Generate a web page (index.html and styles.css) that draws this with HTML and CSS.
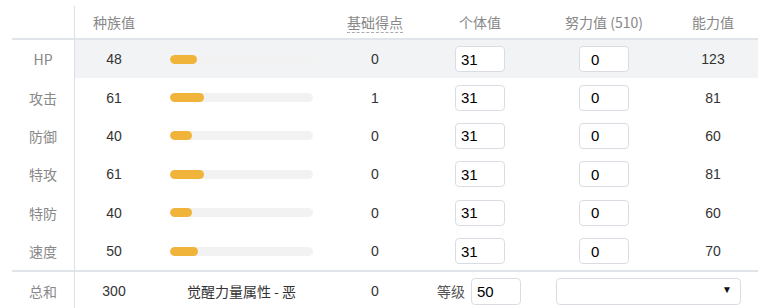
FILE: index.html
```html
<!DOCTYPE html>
<html lang="zh-CN">
<head>
<meta charset="utf-8">
<title>能力值计算</title>
<link rel="stylesheet" href="styles.css">
</head>
<body>
<div class="wrap">
<table class="stats">
  <colgroup>
    <col class="c-label"><col class="c-base"><col class="c-bar"><col class="c-ev"><col class="c-iv"><col class="c-eff"><col class="c-total">
  </colgroup>
  <thead>
    <tr>
      <th class="label"></th>
      <th>种族值</th>
      <th></th>
      <th class="center"><span class="dashed">基础得点</span></th>
      <th class="center">个体值</th>
      <th class="center">努力值 (510)</th>
      <th class="center">能力值</th>
    </tr>
  </thead>
  <tbody>
    <tr class="hl">
      <th class="label">HP</th>
      <td class="num">48</td>
      <td><div class="track"><div class="fill" style="width:27px"></div></div></td>
      <td class="center num">0</td>
      <td class="center"><input class="box iv" value="31"></td>
      <td class="center"><input class="box ev" value="0"></td>
      <td class="center num">123</td>
    </tr>
    <tr>
      <th class="label">攻击</th>
      <td class="num">61</td>
      <td><div class="track"><div class="fill" style="width:34px"></div></div></td>
      <td class="center num">1</td>
      <td class="center"><input class="box iv" value="31"></td>
      <td class="center"><input class="box ev" value="0"></td>
      <td class="center num">81</td>
    </tr>
    <tr>
      <th class="label">防御</th>
      <td class="num">40</td>
      <td><div class="track"><div class="fill" style="width:22px"></div></div></td>
      <td class="center num">0</td>
      <td class="center"><input class="box iv" value="31"></td>
      <td class="center"><input class="box ev" value="0"></td>
      <td class="center num">60</td>
    </tr>
    <tr>
      <th class="label">特攻</th>
      <td class="num">61</td>
      <td><div class="track"><div class="fill" style="width:34px"></div></div></td>
      <td class="center num">0</td>
      <td class="center"><input class="box iv" value="31"></td>
      <td class="center"><input class="box ev" value="0"></td>
      <td class="center num">81</td>
    </tr>
    <tr>
      <th class="label">特防</th>
      <td class="num">40</td>
      <td><div class="track"><div class="fill" style="width:22px"></div></div></td>
      <td class="center num">0</td>
      <td class="center"><input class="box iv" value="31"></td>
      <td class="center"><input class="box ev" value="0"></td>
      <td class="center num">60</td>
    </tr>
    <tr>
      <th class="label">速度</th>
      <td class="num">50</td>
      <td><div class="track"><div class="fill" style="width:28px"></div></div></td>
      <td class="center num">0</td>
      <td class="center"><input class="box iv" value="31"></td>
      <td class="center"><input class="box ev" value="0"></td>
      <td class="center num">70</td>
    </tr>
  </tbody>
  <tfoot>
    <tr>
      <th class="label">总和</th>
      <td class="num">300</td>
      <td class="center hp-type">觉醒力量属性 - 恶</td>
      <td class="center num">0</td>
      <td class="center"><span class="lv"><span class="lv-text">等级</span><input class="box lvbox" value="50"></span></td>
      <td colspan="2" class="sel-cell">
        <div class="sel"><select class="nature"><option></option></select><span class="arrow">▼</span></div>
      </td>
    </tr>
  </tfoot>
</table>
</div>
</body>
</html>
```

FILE: styles.css
```css
* { box-sizing: border-box; }
html, body { margin: 0; padding: 0; background: #fff; }
body {
  font-family: "Liberation Sans", "Noto Sans CJK SC", sans-serif;
  font-size: 14px;
  color: #333;
}
.wrap { padding: 6px 18px 0 12px; }
.stats {
  width: 746px;
  table-layout: fixed;
  border-collapse: separate;
  border-spacing: 0;
}
.c-label { width: 63px; }
.c-base { width: 78px; }
.c-bar { width: 177px; }
.c-ev { width: 90px; }
.c-iv { width: 120px; }
.c-eff { width: 128px; }
.c-total { width: 90px; }

.stats th, .stats td {
  padding: 0;
  font-weight: normal;
  vertical-align: middle;
}
.stats thead th {
  height: 34px;
  color: #888;
  font-family: "Noto Sans CJK SC", sans-serif;
  font-size: 14px;
  text-align: center;
  border-bottom: 2px solid #e1e4e9;
}
.stats .label {
  border-right: 1px solid #dde1e7;
  text-align: center;
  color: #888;
  font-family: "Noto Sans CJK SC", sans-serif;
  font-size: 14px;
  background: #fff;
}
.stats thead th.label { border-bottom: 2px solid #e1e4e9; }
.stats tbody tr { height: 38.4px; }
.stats tbody tr.hl td { background: #f2f3f5; }
.num { text-align: center; color: #333; }
.center { text-align: center; }
.dashed {
  display: inline-block;
  border-bottom: 1px dashed #aaa;
  line-height: 18px;
  padding-bottom: 1px;
}
.track {
  margin-left: 17px;
  width: 143px;
  height: 9px;
  border-radius: 5px;
  background: #f2f2f2;
  overflow: hidden;
}
.fill {
  height: 9px;
  border-radius: 5px;
  background: #f0b43b;
}
.box {
  display: inline-block;
  vertical-align: middle;
  width: 50px;
  height: 26px;
  border: 1px solid #d9dde3;
  border-radius: 4px;
  background: #fff;
  font-family: "Liberation Sans", sans-serif;
  font-size: 15px;
  color: #000;
  outline: none;
  margin: 0;
}
.iv { padding: 0 5px; }
.ev { padding: 0 11px; }
.stats tfoot th, .stats tfoot td {
  height: 40px;
  border-top: 2px solid #e1e4e9;
}
.hp-type {
  font-family: "Noto Sans CJK SC", sans-serif;
  color: #333;
}
.lv {
  display: inline-flex;
  align-items: center;
  gap: 6px;
  margin-left: -2px;
}
.lv-text {
  font-family: "Noto Sans CJK SC", sans-serif;
  color: #555;
}
.lvbox { height: 27px; padding: 0 5px; }
.stats .sel-cell { padding-left: 16px; padding-right: 17px; }
.sel {
  position: relative;
  width: 185px;
  height: 27px;
}
.nature {
  display: block;
  width: 185px;
  height: 27px;
  border: 1px solid #d9dde3;
  border-radius: 4px;
  background: #fff;
  appearance: none;
  -webkit-appearance: none;
  margin: 0;
  outline: none;
}
.arrow {
  position: absolute;
  right: 9px;
  top: 6px;
  font-size: 10px;
  color: #111;
  pointer-events: none;
}
```
